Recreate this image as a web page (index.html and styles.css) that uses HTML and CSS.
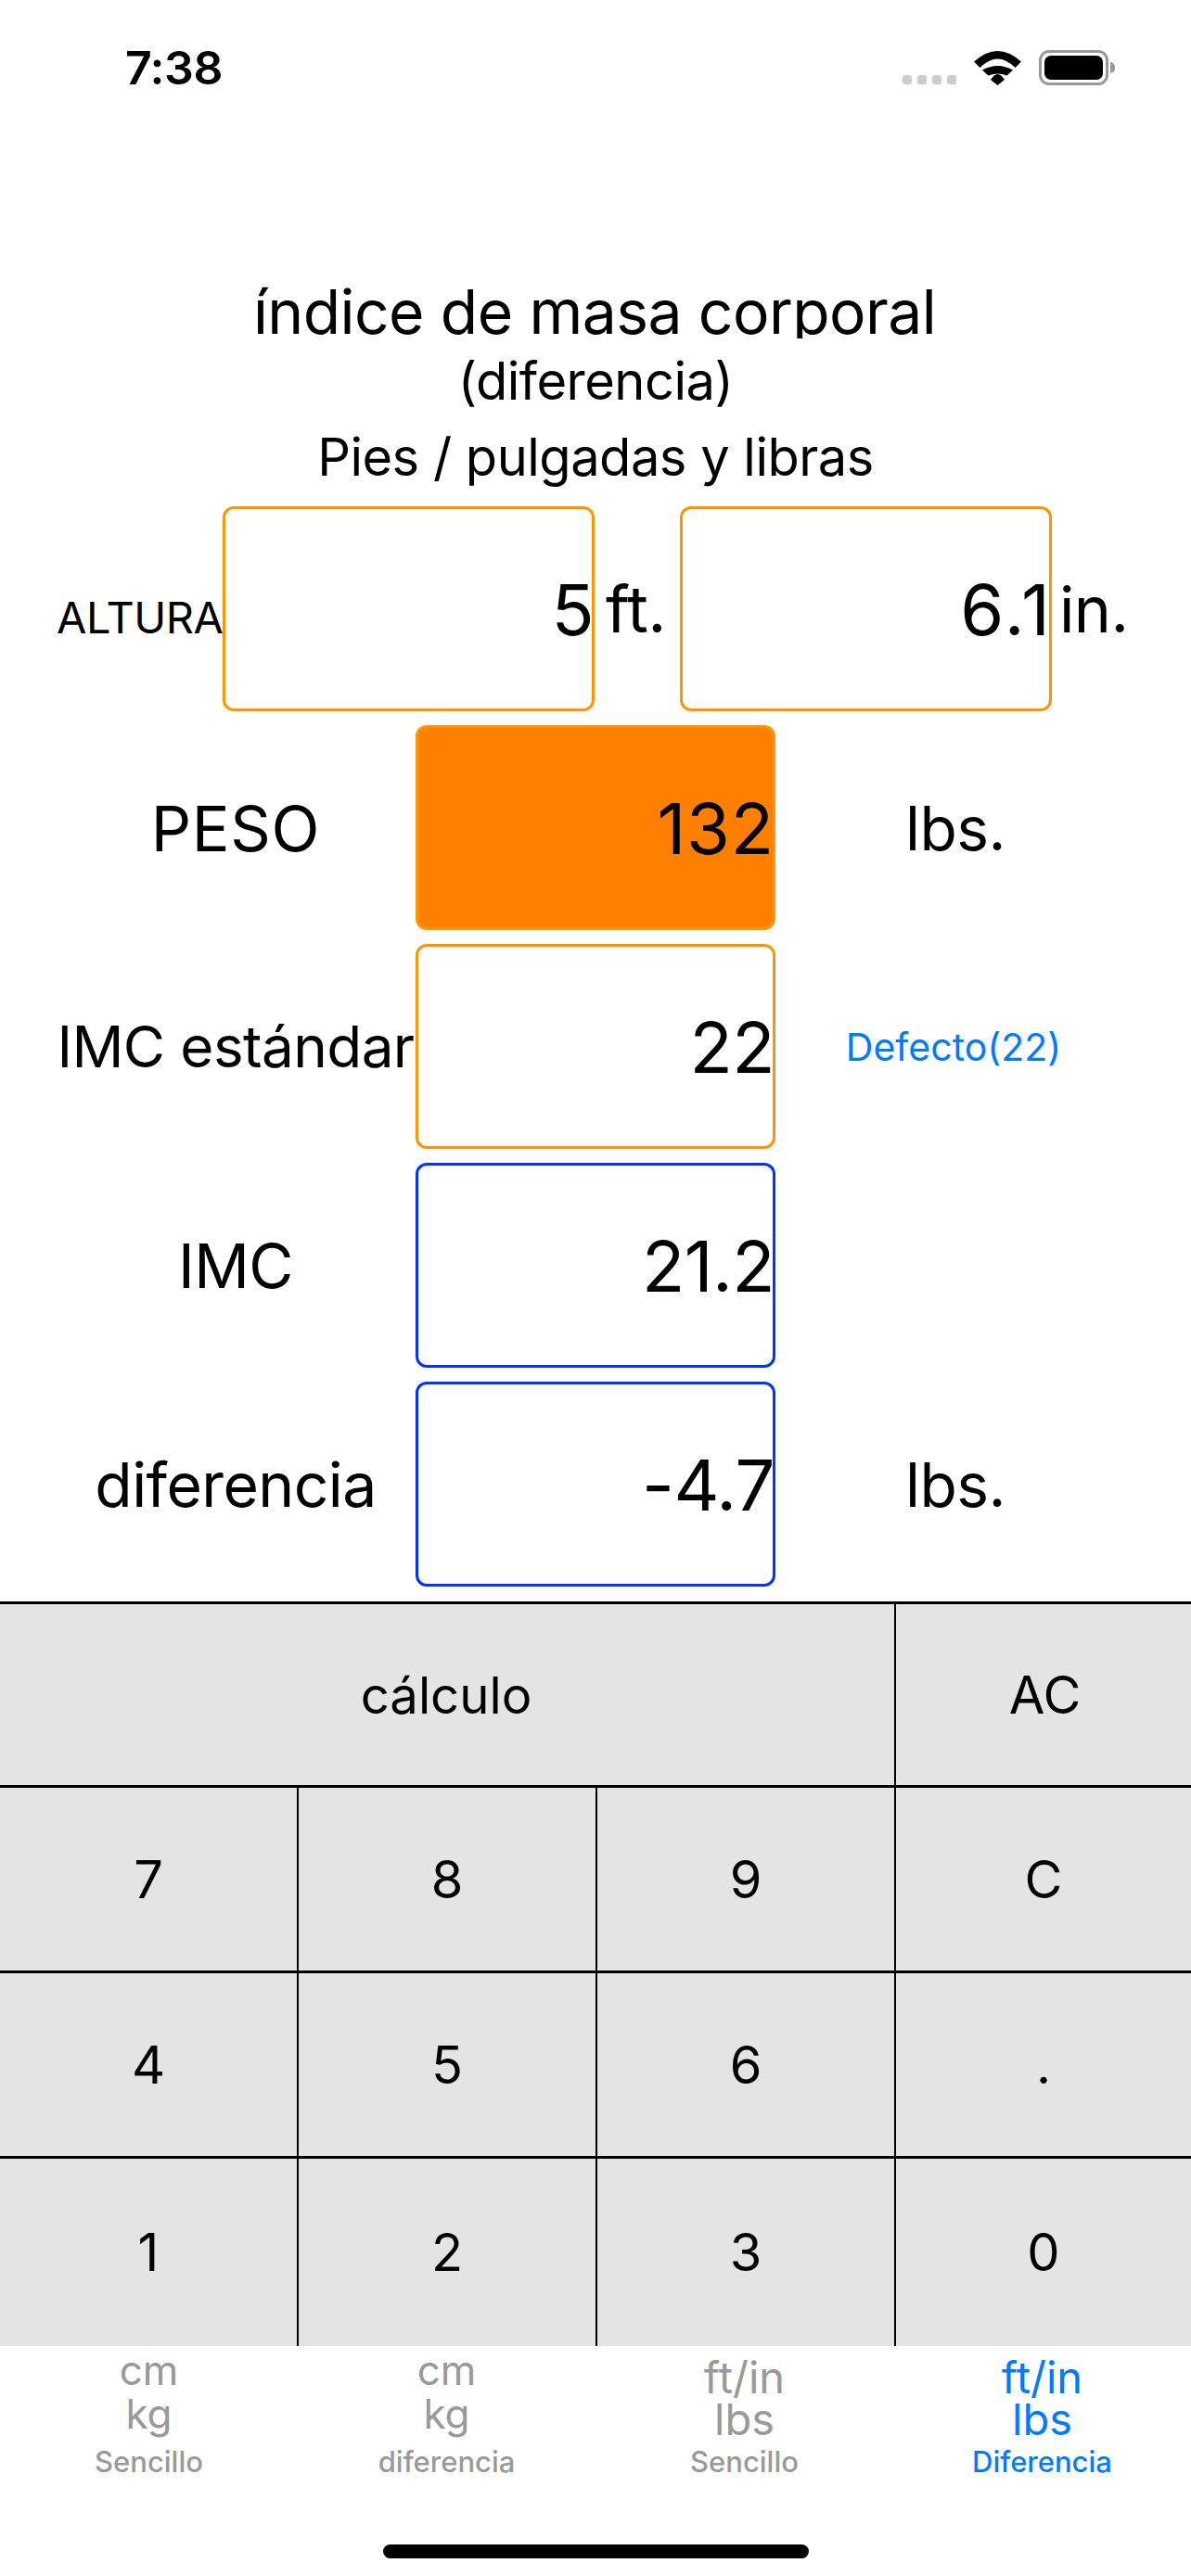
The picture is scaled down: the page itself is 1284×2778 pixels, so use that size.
FILE: index.html
```html
<!DOCTYPE html>
<html lang="es">
<head>
<meta charset="utf-8">
<title>IMC</title>
<link rel="stylesheet" href="styles.css">
</head>
<body>
<div class="screen">
  <header class="status">
    <span class="time">7:38</span>
    <div class="status-icons">
      <div class="signal"><i></i><i></i><i></i><i></i></div>
      <svg class="wifi" viewBox="0 0 51 37" width="51" height="37"><path d="M0 11.5Q25.5-11.5 51 11.5L44.5 18Q25.5-1 6.5 18Z"/><path d="M9 20.5Q25.5 11.5 42 20.5L35.5 26.5Q25.5 22.5 15.5 26.5Z"/><path d="M18 31Q25.5 19 33 31L25.5 37Z"/></svg>
      <div class="battery"><div class="battery-body"><div class="battery-fill"></div></div><div class="battery-cap"></div></div>
    </div>
  </header>
  <section class="titles">
    <div class="title-main">índice de masa corporal</div>
    <div class="title-sub">(diferencia)</div>
    <div class="title-units">Pies / pulgadas y libras</div>
  </section>
  <section class="form">
    <div class="row">
      <div class="label-small">ALTURA</div>
      <div class="field orange"><span>5</span></div>
      <div class="unit-tight">ft.</div>
      <div class="field orange"><span class="wider">6.1</span></div>
      <div class="unit-tight in">in.</div>
    </div>
    <div class="row">
      <div class="label caps">PESO</div>
      <div class="field wide filled"><span class="open">132</span></div>
      <div class="unit">lbs.</div>
    </div>
    <div class="row">
      <div class="label fit">IMC estándar</div>
      <div class="field wide orange"><span>22</span></div>
      <div class="unit link">Defecto(22)</div>
    </div>
    <div class="row">
      <div class="label">IMC</div>
      <div class="field wide blue"><span>21.2</span></div>
      <div class="unit"></div>
    </div>
    <div class="row">
      <div class="label">diferencia</div>
      <div class="field wide blue"><span>-4.7</span></div>
      <div class="unit">lbs.</div>
    </div>
  </section>
  <section class="keypad">
    <div class="key-row top"><div class="key calc">cálculo</div><div class="key ac">AC</div></div>
    <div class="key-row r2"><div class="key">7</div><div class="key">8</div><div class="key">9</div><div class="key">C</div></div>
    <div class="key-row r3"><div class="key">4</div><div class="key">5</div><div class="key">6</div><div class="key">.</div></div>
    <div class="key-row r4"><div class="key">1</div><div class="key">2</div><div class="key">3</div><div class="key">0</div></div>
  </section>
  <nav class="tabs">
    <div class="tab metric"><div class="tab-icon">cm<br>kg</div><div class="tab-label">Sencillo</div></div>
    <div class="tab metric"><div class="tab-icon">cm<br>kg</div><div class="tab-label">diferencia</div></div>
    <div class="tab imperial"><div class="tab-icon">ft/in<br>lbs</div><div class="tab-label">Sencillo</div></div>
    <div class="tab imperial active"><div class="tab-icon">ft/in<br>lbs</div><div class="tab-label">Diferencia</div></div>
  </nav>
  <div class="home-wrap"><div class="home"></div></div>
</div>
</body>
</html>
```
FILE: styles.css
```css
* { box-sizing: border-box; }
html, body { margin: 0; padding: 0; background: #fff; }
body { font-family: Inter, "Liberation Sans", sans-serif; color: #000; }
.screen { width: 1284px; height: 2778px; display: flex; flex-direction: column; overflow: hidden; }

.status { height: 146px; display: flex; align-items: center; justify-content: space-between; padding: 0 82px 0 135px; flex: none; }
.time { font-size: 50px; font-weight: 600; line-height: 40px; letter-spacing: -0.5px; }
.status-icons { display: flex; align-items: flex-end; height: 38px; }
.signal { display: flex; gap: 6px; margin-right: 19px; padding-bottom: 1px; }
.signal i { width: 10px; height: 10px; border-radius: 3px; background: #ccc; display: block; }
.wifi { fill: #000; margin-right: 19px; display: block; }
.battery { display: flex; align-items: center; height: 38px; }
.battery-body { width: 75px; height: 38px; border: 3px solid #999; border-radius: 11px; padding: 3px; }
.battery-fill { width: 100%; height: 100%; background: #000; border-radius: 7px; }
.battery-cap { width: 5px; height: 12px; background: #999; border-radius: 0 5px 5px 0; margin-left: 2px; }

.titles { height: 400px; flex: none; text-align: center; display: flex; flex-direction: column; }
.title-main { margin-top: 157px; padding-right: 2px; height: 62px; line-height: 66px; font-size: 66px; overflow: hidden; letter-spacing: -0.6px; }
.title-sub { margin-top: 16px; height: 60px; line-height: 60px; font-size: 56px; letter-spacing: -0.5px; }
.title-units { margin-top: 22px; height: 60px; line-height: 60px; font-size: 56px; letter-spacing: -0.5px; }

.form { flex: none; display: flex; flex-direction: column; gap: 15px; height: 1181px; }
.row { display: flex; align-items: center; height: 221px; flex: none; }
.label-small { width: 240px; padding: 18px 0 0 61px; font-size: 47px; white-space: nowrap; letter-spacing: -0.5px; }
.label { width: 448px; padding-left: 60px; text-align: center; font-size: 66px; white-space: nowrap; letter-spacing: -0.6px; }
.label.caps { font-size: 68px; letter-spacing: 0.6px; }
.label.fit { font-size: 62px; }
.field { width: 401px; height: 221px; flex: none; border-radius: 12px; border: 3px solid transparent; display: flex; align-items: center; justify-content: flex-end; padding-right: 0; font-size: 76px; letter-spacing: -0.6px; }
.field span { margin-right: -2px; }
.field .open { letter-spacing: 0.8px; }
.field .wider { letter-spacing: 3px; margin-right: -4px; }
.field.wide { width: 388px; }
.orange { border-color: #ff9500; }
.blue { border-color: #0433ff; }
.filled { background: #ff8000; border-color: #ff9500; }
.unit-tight { width: 92px; padding-left: 12px; font-size: 70px; letter-spacing: -0.6px; white-space: nowrap; }
.unit-tight.in { padding-left: 8px; font-size: 68px; }
.unit { width: 388px; text-align: center; font-size: 66px; letter-spacing: -0.6px; }
.link { font-size: 41px; color: #007aff; letter-spacing: 0; padding-right: 4px; }

.keypad { flex: none; background: #e4e4e4; }
.key-row { display: grid; grid-template-columns: 320px 322px 322px 320px; border-top: 3px solid #000; height: 201px; }
.key-row.top { grid-template-columns: 964px 320px; height: 198px; }
.key-row.r2 { height: 200px; }
.key-row.r3 { height: 200px; }
.key-row.r4 { height: 205px; }
.key { display: flex; align-items: center; justify-content: center; font-size: 56px; border-left: 2px solid #000; }
.key:first-child { border-left: 0; }
.key.calc { font-size: 54.5px; padding-right: 2px; }
.key.ac { padding-left: 3px; }

.tabs { flex: none; height: 214px; display: grid; grid-template-columns: repeat(4, 321px); color: #999; text-align: center; }
.tab-icon { height: 107px; }
.metric .tab-icon { padding-top: 3px; font-size: 44px; line-height: 47px; }
.imperial .tab-icon { padding-top: 11px; font-size: 47px; line-height: 45px; }
.tab-label { font-size: 31px; font-weight: 500; line-height: 36px; }
.active { color: #007aff; }
.home-wrap { flex: none; display: flex; justify-content: center; }
.home { width: 459px; height: 15px; background: #000; border-radius: 8px; }
```
